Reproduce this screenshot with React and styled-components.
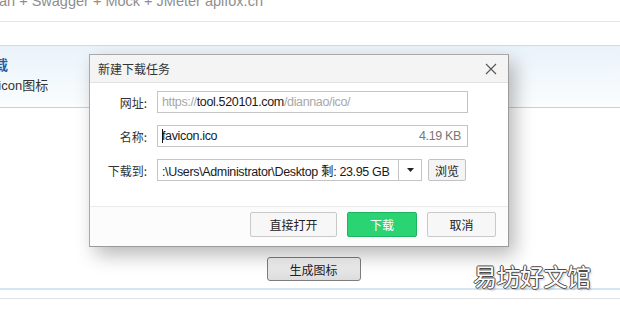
import React from "react";
import styled, { createGlobalStyle } from "styled-components";

const GlobalStyle = createGlobalStyle`
  html, body {
    margin: 0;
    padding: 0;
    background: #fff;
  }
  body {
    font-family: "Liberation Sans", "Noto Sans CJK SC", sans-serif;
  }
`;

const Page = styled.div`
  position: relative;
  width: 620px;
  height: 309px;
  overflow: hidden;
  background: #fff;
  display: flex;
  flex-direction: column;
`;

const TopLine = styled.div`
  height: 22px;
  border-bottom: 1px solid #e6e6e6;
  box-sizing: border-box;
  overflow: hidden;
  .txt {
    margin-top: -7px;
    margin-left: -1px;
    font-family: "Liberation Sans", sans-serif;
    font-size: 14.5px;
    line-height: 16px;
    color: #8e8e8e;
    white-space: nowrap;
  }
`;

const Panel = styled.div`
  margin-top: 23px;
  height: 63px;
  box-sizing: border-box;
  border-top: 1px solid #c9dcec;
  border-bottom: 1px solid #bcd3e8;
  background: linear-gradient(#eaf3fa, #fbfdfe);
  display: flex;
  flex-direction: column;
  gap: 6px;
  padding-top: 10px;
  overflow: hidden;
  .head {
    margin-left: -20px;
    font-family: "Noto Sans CJK SC", sans-serif;
    font-size: 14px;
    font-weight: 700;
    line-height: 16px;
    color: #1e5ea8;
  }
  .sub {
    margin-left: -19px;
    font-size: 13px;
    line-height: 16px;
    color: #333;
  }
`;

const Content = styled.div`
  height: 182px;
  box-sizing: border-box;
  border-bottom: 2px solid #d3e4f3;
  padding: 149px 0 0 7px;
  display: flex;
  justify-content: center;
  align-items: flex-start;
`;

const GenButton = styled.button`
  width: 94px;
  height: 24px;
  border: 1px solid #7d7d7d;
  border-radius: 3px;
  background: linear-gradient(#f6f6f6, #dcdcdc);
  font-family: "Noto Sans CJK SC", sans-serif;
  font-size: 12px;
  color: #222;
  padding: 0;
`;

const BottomLine = styled.div`
  margin-top: 8px;
  border-top: 1px solid #e2e2e2;
`;

const Watermark = styled.div`
  position: absolute;
  left: 473px;
  top: 259px;
  font-family: "Noto Sans CJK SC", sans-serif;
  font-size: 24px;
  line-height: 34px;
  letter-spacing: -0.5px;
  color: #fff;
  text-shadow: 1px 0 0 #4a4a4a, -1px 0 0 #4a4a4a, 0 1px 0 #4a4a4a,
    0 -1px 0 #4a4a4a, 2px 2px 2px rgba(0, 0, 0, 0.2);
`;

const Dialog = styled.div`
  position: absolute;
  left: 89px;
  top: 54px;
  width: 420px;
  height: 193px;
  box-sizing: border-box;
  background: #fff;
  border: 1px solid #a9a9a9;
  border-right-color: #9a9a9a;
  border-bottom-color: #9a9a9a;
  box-shadow: 6px 8px 18px rgba(0, 0, 0, 0.28);
  display: flex;
  flex-direction: column;
`;

const TitleBar = styled.div`
  height: 28px;
  box-sizing: border-box;
  background: #f4f4f4;
  border-bottom: 1px solid #e2e2e2;
  display: flex;
  align-items: center;
  justify-content: space-between;
  padding: 0 11px 0 8px;
  font-family: "Noto Sans CJK SC", sans-serif;
  font-size: 12px;
  color: #333;
`;

const Body = styled.div`
  flex: 1;
  display: flex;
  flex-direction: column;
  gap: 12px;
  padding-top: 8px;
  border-bottom: 1px solid #ebebeb;
`;

const Row = styled.div`
  display: flex;
  align-items: center;
  height: 22px;
`;

const Label = styled.div`
  width: 57px;
  text-align: right;
  font-family: "Noto Sans CJK SC", sans-serif;
  font-size: 12px;
  color: #333;
  margin-right: 10px;
`;

const Field = styled.div`
  width: ${(p) => p.$w}px;
  height: 22px;
  box-sizing: border-box;
  border: 1px solid #c4c4c4;
  display: flex;
  align-items: center;
  padding: 0 6px 0 4px;
  font-family: "Liberation Sans", "Noto Sans CJK SC", sans-serif;
  font-size: 12.5px;
  letter-spacing: -0.35px;
  color: #1a1a1a;
  white-space: nowrap;
  overflow: hidden;
  .dim {
    color: #a8a8a8;
  }
  .size {
    margin-left: auto;
    color: #777;
  }
  .caret {
    width: 1px;
    height: 14px;
    background: #111;
    margin-right: -1px;
  }
`;

const Combo = styled.div`
  display: flex;
  height: 22px;
  box-sizing: border-box;
  border: 1px solid #c4c4c4;
  width: 265px;
  .value {
    flex: 1;
    display: flex;
    align-items: center;
    padding-left: 4px;
    font-family: "Liberation Sans", "Noto Sans CJK SC", sans-serif;
    font-size: 12.5px;
    letter-spacing: -0.35px;
    color: #1a1a1a;
    white-space: nowrap;
    overflow: hidden;
  }
  .arrow {
    width: 22px;
    border-left: 1px solid #c4c4c4;
    display: flex;
    align-items: center;
    justify-content: center;
  }
`;

const SmallButton = styled.button`
  margin-left: 6px;
  width: 38px;
  height: 22px;
  padding: 0;
  border: 1px solid #c2c2c2;
  border-radius: 2px;
  background: #f4f4f4;
  font-family: "Noto Sans CJK SC", sans-serif;
  font-size: 12px;
  color: #222;
`;

const Footer = styled.div`
  height: 39px;
  box-sizing: border-box;
  background: #fcfcfc;
  display: flex;
  justify-content: flex-end;
  align-items: flex-start;
  gap: 10px;
  padding: 5px 12px 0 0;
`;

const ActionButton = styled.button`
  width: ${(p) => p.$w}px;
  height: 25px;
  padding: 0;
  border-radius: 2px;
  border: 1px solid ${(p) => (p.$primary ? "#1fb560" : "#c9c9c9")};
  background: ${(p) => (p.$primary ? "#2bd472" : "#f7f7f7")};
  color: ${(p) => (p.$primary ? "#fff" : "#222")};
  font-family: "Noto Sans CJK SC", sans-serif;
  font-size: 12px;
`;

const CloseIcon = () => (
  <svg width="12" height="12" viewBox="0 0 12 12">
    <path d="M1 1 L11 11 M11 1 L1 11" stroke="#555" strokeWidth="1.1" />
  </svg>
);

export default function App() {
  return (
    <>
      <GlobalStyle />
      <Page>
        <TopLine>
          <div className="txt">an + Swagger + Mock + JMeter apifox.cn</div>
        </TopLine>
        <Panel>
          <div className="head">下载</div>
          <div className="sub">favicon图标</div>
        </Panel>
        <Content>
          <GenButton>生成图标</GenButton>
        </Content>
        <BottomLine />
        <Watermark>易坊好文馆</Watermark>

        <Dialog>
          <TitleBar>
            <span>新建下载任务</span>
            <CloseIcon />
          </TitleBar>
          <Body>
            <Row>
              <Label>网址:</Label>
              <Field $w={311}>
                <span className="dim">https://</span>
                <span>tool.520101.com</span>
                <span className="dim">/diannao/ico/</span>
              </Field>
            </Row>
            <Row>
              <Label>名称:</Label>
              <Field $w={311}>
                <span className="caret" />
                <span>favicon.ico</span>
                <span className="size">4.19 KB</span>
              </Field>
            </Row>
            <Row>
              <Label>下载到:</Label>
              <Combo>
                <div className="value">
                  :\Users\Administrator\Desktop 剩: 23.95 GB
                </div>
                <div className="arrow">
                  <svg width="7" height="4" viewBox="0 0 7 4">
                    <path d="M0 0 H7 L3.5 4 Z" fill="#222" />
                  </svg>
                </div>
              </Combo>
              <SmallButton>浏览</SmallButton>
            </Row>
          </Body>
          <Footer>
            <ActionButton $w={87}>直接打开</ActionButton>
            <ActionButton $w={70} $primary>
              下载
            </ActionButton>
            <ActionButton $w={69}>取消</ActionButton>
          </Footer>
        </Dialog>
      </Page>
    </>
  );
}
